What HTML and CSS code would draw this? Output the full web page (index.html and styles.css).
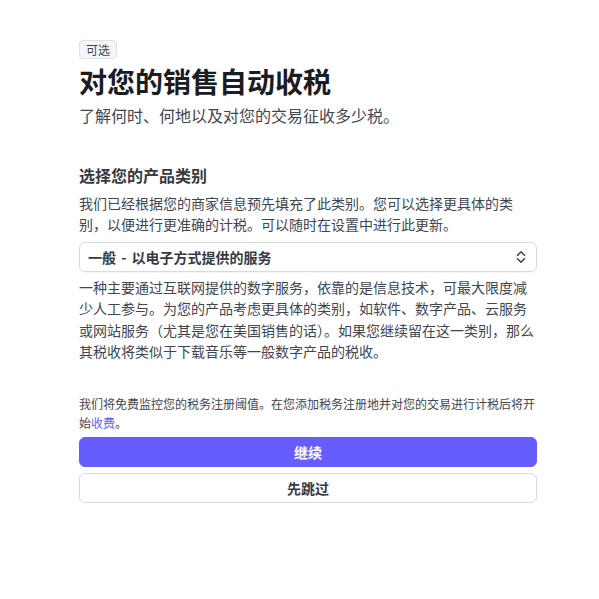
FILE: index.html
```html
<!DOCTYPE html>
<html lang="zh">
<head>
<meta charset="utf-8">
<link rel="stylesheet" href="styles.css">
</head>
<body>
<main class="page">
  <span class="badge">可选</span>
  <h1 class="title">对您的销售自动收税</h1>
  <p class="subtitle">了解何时、何地以及对您的交易征收多少税。</p>

  <h2 class="section-title">选择您的产品类别</h2>
  <p class="text">我们已经根据您的商家信息预先填充了此类别。您可以选择更具体的类别，以便进行更准确的计税。可以随时在设置中进行此更新。</p>

  <div class="select">
    <span class="select-value">一般 - 以电子方式提供的服务</span>
    <svg class="chevrons" width="12" height="14" viewBox="0 0 12 14" aria-hidden="true">
      <path d="M2.5 5.2 L6 1.8 L9.5 5.2" fill="none" stroke="#414552" stroke-width="1.6" stroke-linecap="round" stroke-linejoin="round"/>
      <path d="M2.5 8.8 L6 12.2 L9.5 8.8" fill="none" stroke="#414552" stroke-width="1.6" stroke-linecap="round" stroke-linejoin="round"/>
    </svg>
  </div>

  <p class="text desc">一种主要通过互联网提供的数字服务，依靠的是信息技术，可最大限度减少人工参与。为您的产品考虑更具体的类别，如软件、数字产品、云服务或网站服务（尤其是您在美国销售的话）。如果您继续留在这一类别，那么其税收将类似于下载音乐等一般数字产品的税收。</p>

  <p class="note">我们将免费监控您的税务注册阈值。在您添加税务注册地并对您的交易进行计税后将开始<a class="link" href="#">收费</a>。</p>

  <div class="actions">
    <button class="btn btn-primary" type="button">继续</button>
    <button class="btn btn-secondary" type="button">先跳过</button>
  </div>
</main>
</body>
</html>
```

FILE: styles.css
```css
html, body {
  margin: 0;
  padding: 0;
  background: #ffffff;
}

body {
  font-family: "Noto Sans CJK SC", "Noto Sans", sans-serif;
  color: #414552;
}

.page {
  width: 458px;
  padding: 40px 0 0 79px;
  display: flex;
  flex-direction: column;
  align-items: flex-start;
}

.badge {
  display: inline-block;
  font-size: 12px;
  line-height: 17px;
  padding: 0 6px;
  border: 1px solid #dde1e6;
  border-radius: 4px;
  background: #f5f6f8;
  color: #414552;
}

.title {
  margin: 4px 0 0;
  font-size: 28px;
  line-height: 36px;
  font-weight: 700;
  color: #1a1b25;
}

.subtitle {
  margin: 4px 0 0;
  font-size: 16px;
  line-height: 24px;
  color: #414552;
}

.section-title {
  margin: 36px 0 0;
  font-size: 16px;
  line-height: 24px;
  font-weight: 700;
  color: #353a44;
}

.text {
  margin: 6px 0 0;
  font-size: 14px;
  line-height: 21px;
  color: #414552;
  width: 458px;
}

.select {
  margin-top: 7px;
  box-sizing: border-box;
  width: 458px;
  height: 30px;
  border: 1px solid #d5dbe1;
  border-radius: 6px;
  display: flex;
  align-items: center;
  justify-content: space-between;
  padding: 0 9px 0 8px;
  box-shadow: 0 1px 1px rgba(0, 0, 0, 0.04);
}

.select-value {
  font-size: 14px;
  font-weight: 700;
  color: #353a44;
  word-spacing: 2px;
}

.chevrons {
  display: block;
}

.text.desc {
  margin-top: 5px;
  line-height: 21.3px;
}

.note {
  margin: 32px 0 0;
  font-size: 12px;
  line-height: 19px;
  color: #414552;
  width: 458px;
}

.link {
  color: #635bff;
  text-decoration: none;
}

.actions {
  margin-top: 5px;
  width: 458px;
  display: flex;
  flex-direction: column;
  gap: 6px;
}

.btn {
  box-sizing: border-box;
  width: 100%;
  height: 30px;
  border-radius: 6px;
  font-family: inherit;
  font-size: 14px;
  font-weight: 700;
  cursor: pointer;
}

.btn-primary {
  background: #675dff;
  border: 1px solid #675dff;
  color: #ffffff;
}

.btn-secondary {
  background: #ffffff;
  border: 1px solid #d5dbe1;
  color: #353a44;
}
```
